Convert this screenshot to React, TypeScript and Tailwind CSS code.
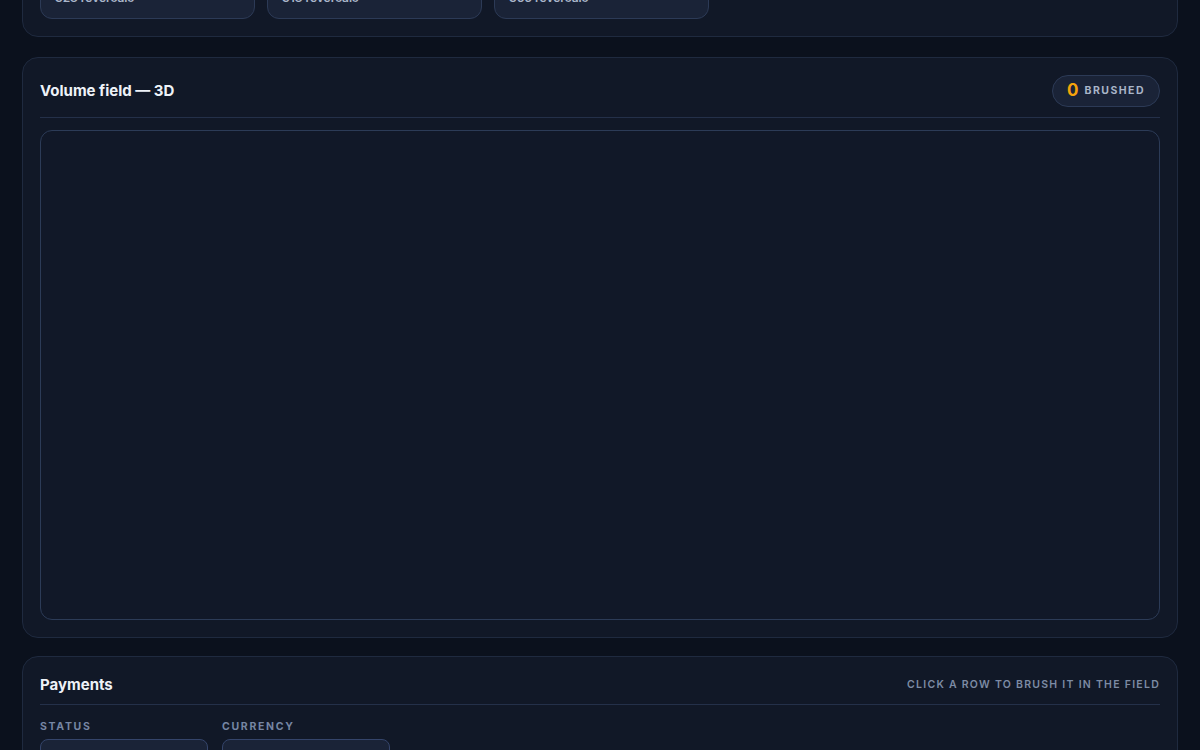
export default function App() {
  const stats = [
    { label: "Settled", value: "$1.24M", sub: "328 reversals" },
    { label: "Pending", value: "$412K", sub: "318 reversals" },
    { label: "Failed", value: "$88K", sub: "366 reversals" },
  ];

  return (
    <div className="h-[750px] overflow-hidden bg-[#0b111d] font-['Inter',sans-serif] text-[#e6ebf3]">
      <div className="mt-[-79px] flex flex-col px-[22px]">
        {/* summary panel (scrolled mostly out of view) */}
        <section className="rounded-2xl border border-[#1f2a3f] bg-[#111827] p-[17px]">
          <div className="flex gap-3">
            {stats.map((s) => (
              <div
                key={s.label}
                className="flex h-[80px] w-[215px] flex-col justify-end rounded-xl border border-[#2c3a56] bg-[#1a2337] px-3.5 pb-3"
              >
                <span className="text-[10px] font-semibold uppercase tracking-widest text-[#7b8aa6]">{s.label}</span>
                <span className="text-[18px] font-bold">{s.value}</span>
                <span className="text-[12px] leading-4 font-semibold text-[#aab6ca]">{s.sub}</span>
              </div>
            ))}
          </div>
        </section>

        {/* volume field */}
        <section className="mt-5 flex h-[581px] flex-col gap-3 rounded-2xl border border-[#1f2a3f] bg-[#111827] p-[17px]">
          <div className="flex items-center justify-between border-b border-[#243049] pb-2.5">
            <h2 className="text-[15px] font-bold text-[#eef2f8]">Volume field — 3D</h2>
            <div className="flex h-8 items-center gap-1.5 rounded-full border border-[#2c3a56] bg-[#1a2337] px-3.5">
              <span className="text-[17px] font-bold text-[#f5a30b]">0</span>
              <span className="text-[10.5px] font-bold tracking-[0.14em] text-[#a9b5c8]">BRUSHED</span>
            </div>
          </div>
          <div className="flex-1 rounded-xl border border-[#2c3b57] bg-[#111828]" />
        </section>

        {/* payments */}
        <section className="mt-[18px] flex flex-col rounded-2xl border border-[#1f2a3f] bg-[#111827] p-[17px]">
          <div className="flex h-[31px] items-center justify-between border-b border-[#243049] pb-2.5 pt-0.5">
            <h2 className="text-[15px] font-bold text-[#eef2f8]">Payments</h2>
            <span className="text-[10.5px] font-semibold tracking-[0.12em] text-[#7d8ba4]">
              CLICK A ROW TO BRUSH IT IN THE FIELD
            </span>
          </div>
          <div className="mt-3.5 flex gap-3.5">
            <label className="flex flex-col gap-1">
              <span className="text-[10.5px] font-bold tracking-[0.16em] text-[#7686a3]">STATUS</span>
              <div className="h-9 w-[168px] rounded-lg border border-[#34446a] bg-[#1a2337]" />
            </label>
            <label className="flex flex-col gap-1">
              <span className="text-[10.5px] font-bold tracking-[0.16em] text-[#7686a3]">CURRENCY</span>
              <div className="h-9 w-[168px] rounded-lg border border-[#34446a] bg-[#1a2337]" />
            </label>
          </div>
        </section>
      </div>
    </div>
  );
}
